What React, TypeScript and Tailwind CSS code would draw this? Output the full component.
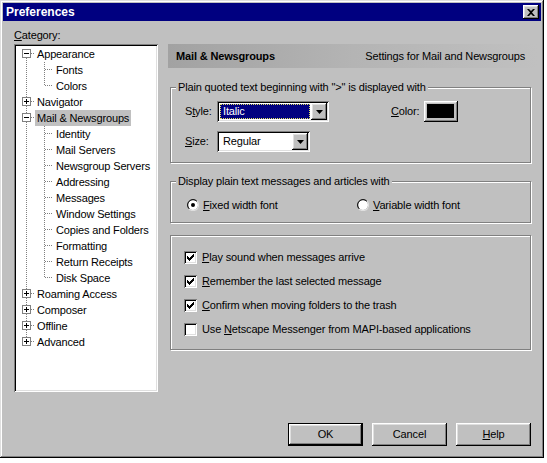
import React from "react";

const raised =
  "shadow-[inset_-1px_-1px_#000,inset_1px_1px_#fff,inset_-2px_-2px_#808080,inset_2px_2px_#dfdfdf]";
const sunken =
  "shadow-[inset_1px_1px_#808080,inset_-1px_-1px_#fff,inset_2px_2px_#000,inset_-2px_-2px_#dfdfdf]";
const etched = "border border-[#808080] shadow-[inset_1px_1px_#fff,1px_1px_#fff]";

type Row = { label: string; level: 0 | 1; exp?: "+" | "-"; last?: boolean; selected?: boolean };

const tree: Row[] = [
  { label: "Appearance", level: 0, exp: "-" },
  { label: "Fonts", level: 1 },
  { label: "Colors", level: 1, last: true },
  { label: "Navigator", level: 0, exp: "+" },
  { label: "Mail & Newsgroups", level: 0, exp: "-", selected: true },
  { label: "Identity", level: 1 },
  { label: "Mail Servers", level: 1 },
  { label: "Newsgroup Servers", level: 1 },
  { label: "Addressing", level: 1 },
  { label: "Messages", level: 1 },
  { label: "Window Settings", level: 1 },
  { label: "Copies and Folders", level: 1 },
  { label: "Formatting", level: 1 },
  { label: "Return Receipts", level: 1 },
  { label: "Disk Space", level: 1, last: true },
  { label: "Roaming Access", level: 0, exp: "+" },
  { label: "Composer", level: 0, exp: "+" },
  { label: "Offline", level: 0, exp: "+" },
  { label: "Advanced", level: 0, exp: "+" },
];

function Gutter({ row, first, lastTop }: { row: Row; first: boolean; lastTop: boolean }) {
  const dot = { stroke: "#808080", strokeDasharray: "1 1", shapeRendering: "crispEdges" as const };
  if (row.level === 0) {
    return (
      <svg width="19" height="16" className="shrink-0">
        {!first && <line x1="10.5" y1="0" x2="10.5" y2="3" {...dot} />}
        {!lastTop && <line x1="10.5" y1="12" x2="10.5" y2="16" {...dot} />}
        <line x1="15" y1="7.5" x2="19" y2="7.5" {...dot} />
        <rect x="6.5" y="3.5" width="8" height="8" fill="#fff" stroke="#808080" shapeRendering="crispEdges" />
        <line x1="8" y1="7.5" x2="13" y2="7.5" stroke="#000" shapeRendering="crispEdges" />
        {row.exp === "+" && <line x1="10.5" y1="5" x2="10.5" y2="10" stroke="#000" shapeRendering="crispEdges" />}
      </svg>
    );
  }
  return (
    <svg width="38" height="16" className="shrink-0">
      <line x1="10.5" y1="0" x2="10.5" y2="16" {...dot} />
      <line x1="28.5" y1="0" x2="28.5" y2={row.last ? 8 : 16} {...dot} />
      <line x1="29" y1="7.5" x2="37" y2="7.5" {...dot} />
    </svg>
  );
}

function Select({ width, value, focused }: { width: string; value: string; focused?: boolean }) {
  return (
    <div className={`${width} h-[21px] bg-white ${sunken} flex p-[2px]`}>
      <div
        className={`flex-1 m-[1px] flex items-center pl-[2px] ${
          focused ? "bg-[#000080] text-white border border-dotted border-[#e0e060]" : "pl-[3px]"
        }`}
      >
        {value}
      </div>
      <div className={`w-[16px] h-[17px] bg-[#c0c0c0] ${raised} flex items-center justify-center`}>
        <svg width="7" height="4">
          <path d="M0 0h7L3.5 4z" fill="#000" />
        </svg>
      </div>
    </div>
  );
}

function Radio({ checked }: { checked?: boolean }) {
  return (
    <svg width="12" height="12" className="shrink-0">
      <circle cx="6" cy="6" r="5.5" fill="#fff" stroke="#808080" />
      <path d="M2 10A5.6 5.6 0 0 0 10 2" fill="none" stroke="#dfdfdf" strokeWidth="1.2" />
      <path d="M2.2 9.8A4.5 4.5 0 0 1 9.8 2.2" fill="none" stroke="#000" strokeWidth="1" />
      {checked && <circle cx="6" cy="6" r="2" fill="#000" />}
    </svg>
  );
}

function Check({ checked }: { checked?: boolean }) {
  return (
    <div className={`w-[13px] h-[13px] shrink-0 bg-white ${sunken} flex items-center justify-center`}>
      {checked && (
        <svg width="7" height="7">
          <path d="M0 2h1v1h1v1h1V3h1V2h1V1h1V0h1v3H6v1H5v1H4v1H3v1H2V6H1V5H0z" fill="#000" />
        </svg>
      )}
    </div>
  );
}

function Btn({ children, def }: { children: React.ReactNode; def?: boolean }) {
  return (
    <div className={`w-[75px] h-[23px] ${def ? "border border-black" : ""}`}>
      <div className={`w-full h-full bg-[#c0c0c0] ${raised} flex items-center justify-center`}>{children}</div>
    </div>
  );
}

export default function App() {
  const lastTopIndex = tree.length - 1;
  return (
    <div className="w-[547px] h-[463px] bg-white font-['Liberation_Sans',Arial,sans-serif] text-[11px] leading-[13px] tracking-[-0.15px] text-black">
      <div className="w-[544px] h-[458px] bg-[#c0c0c0] p-[3px] shadow-[inset_-1px_-1px_#000,inset_1px_1px_#dfdfdf,inset_-2px_-2px_#808080,inset_2px_2px_#fff] flex flex-col">
        {/* title bar */}
        <div className="h-[18px] bg-[#000080] flex items-center justify-between pl-[3px] pr-[2px]">
          <span className="text-white font-bold text-[12px] tracking-normal">Preferences</span>
          <div className={`w-[16px] h-[14px] bg-[#c0c0c0] ${raised} flex items-center justify-center`}>
            <svg width="8" height="7">
              <path d="M0 0h2l2 2 2-2h2L5 3.5 8 7H6L4 5 2 7H0l3-3.5z" fill="#000" />
            </svg>
          </div>
        </div>

        <div className="flex">
          {/* left column */}
          <div className="ml-[11px] w-[144px]">
            <div className="h-[23px] pt-[8px]">
              <u>C</u>ategory:
            </div>
            <div className={`h-[348px] bg-white ${sunken} p-[2px]`}>
              {tree.map((r, i) => (
                <div key={r.label} className="h-[16px] flex items-stretch">
                  <Gutter row={r} first={i === 0} lastTop={i === lastTopIndex} />
                  <span className={`px-[2px] flex items-center ${r.selected ? "bg-[#c0c0c0]" : ""}`}>
                    {r.label}
                  </span>
                </div>
              ))}
            </div>
          </div>

          {/* right panel */}
          <div className="ml-[10px] w-[370px] mt-[23px]">
            <div className="h-[24px] flex items-center justify-between pl-[8px] pr-[13px] bg-gradient-to-r from-[#a2a2a2] via-[#b4b4b4] to-[#c0c0c0]">
              <span className="font-bold">Mail &amp; Newsgroups</span>
              <span>Settings for Mail and Newsgroups</span>
            </div>

            <div className={`mt-[19px] ml-[2px] w-[361px] h-[76px] ${etched}`}>
              <div className="-mt-[7px] ml-[5px] px-[2px] bg-[#c0c0c0] w-fit">
                Plain quoted text beginning with "&gt;" is displayed with
              </div>
              <div className="mt-[7px] pl-[14px] flex items-center h-[21px]">
                <span className="w-[32px]">
                  S<u>t</u>yle:
                </span>
                <Select width="w-[112px]" value="Italic" focused />
                <span className="ml-[62px] w-[33px]">
                  <u>C</u>olor:
                </span>
                <div className={`w-[34px] h-[21px] bg-[#c0c0c0] ${raised} p-[3px] pb-[4px] pr-[4px]`}>
                  <div className="w-full h-full bg-black" />
                </div>
              </div>
              <div className="mt-[9px] pl-[14px] flex items-center h-[21px]">
                <span className="w-[32px]">
                  <u>S</u>ize:
                </span>
                <Select width="w-[93px]" value="Regular" />
              </div>
            </div>

            <div className={`mt-[18px] ml-[2px] w-[361px] h-[42px] ${etched}`}>
              <div className="-mt-[7px] ml-[5px] px-[2px] bg-[#c0c0c0] w-fit">
                Display plain text messages and articles with
              </div>
              <div className="mt-[9px] pl-[16px] flex items-center h-[16px]">
                <div className="w-[170px] flex items-center gap-[4px]">
                  <Radio checked />
                  <span>
                    <u>F</u>ixed width font
                  </span>
                </div>
                <div className="flex items-center gap-[4px]">
                  <Radio />
                  <span>
                    <u>V</u>ariable width font
                  </span>
                </div>
              </div>
            </div>

            <div className={`mt-[12px] ml-[2px] w-[361px] h-[115px] ${etched} pt-[9px]`}>
              {[
                { c: true, t: <><u>P</u>lay sound when messages arrive</> },
                { c: true, t: <><u>R</u>emember the last selected message</> },
                { c: true, t: <><u>C</u>onfirm when moving folders to the trash</> },
                { c: false, t: <>Use <u>N</u>etscape Messenger from MAPI-based applications</> },
              ].map((r, i) => (
                <div key={i} className="h-[24px] flex items-center pl-[13px] gap-[5px]">
                  <Check checked={r.c} />
                  <span>{r.t}</span>
                </div>
              ))}
            </div>
          </div>
        </div>

        <div className="mt-[31px] flex justify-end gap-[9px] pr-[10px]">
          <Btn def>OK</Btn>
          <Btn>Cancel</Btn>
          <Btn>
            <span>
              <u>H</u>elp
            </span>
          </Btn>
        </div>
      </div>
    </div>
  );
}
